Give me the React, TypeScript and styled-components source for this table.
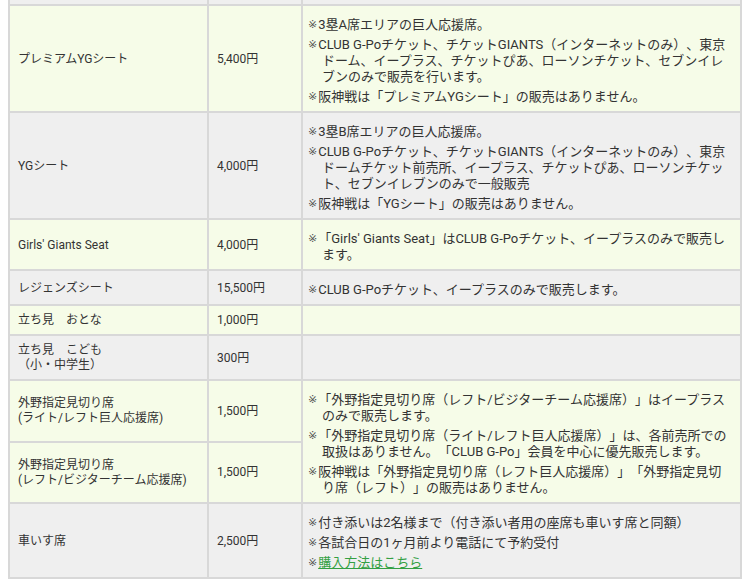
import styled, { createGlobalStyle } from "styled-components";

const GlobalStyle = createGlobalStyle`
    body {
        margin: 0;
        background: #ffffff;
        font-family: Roboto, "Noto Sans CJK JP", sans-serif;
        color: #333333;
    }
`
const Wrapper = styled.div`
    padding: 0 5px 0 8px;
`
const Table = styled.table`
    width: 732px;
    border-collapse: collapse;
    table-layout: fixed;
    font-size: 12px;
    text-spacing-trim: space-all;
`
const Col = styled.col<{ $w: number }>`
    width: ${(p) => p.$w}px;
`
const Row = styled.tr<{ $tone: "green" | "gray" }>`
    background: ${(p) => (p.$tone === "green" ? "#f6fce8" : "#efefef")};
`
const Cell = styled.td`
    border: 2px solid #d8d8d8;
    vertical-align: middle;
    line-height: 15px;
    padding: 7px 8px 6px;
`
const NoteCell = styled(Cell)`
    padding: 7px 8px 6px 5px;
    font-size: 13px;
    line-height: 16px;
`
const Spacer = styled.td`
    height: 4px;
    padding: 0;
    border: 2px solid #d8d8d8;
    border-top: none;
`
const Note = styled.p`
    margin: 4px 0 0;
    padding-left: 14px;
    text-indent: -14px;
`
const Mark = styled.span`
    font-size: 11px;
    font-family: "DejaVu Sans", sans-serif;
    vertical-align: top;
    line-height: 16px;
    margin-right: 1px;
    color: #555555;
`
const Link = styled.a`
    color: #33a043;
    text-decoration: underline;
`

interface Seat {
    name: React.ReactNode;
    price: string;
    notes?: React.ReactNode[];
    noteSpan?: number;
    skipNotes?: boolean;
}

const seats: Seat[] = [
    {
        name: "プレミアムYGシート",
        price: "5,400円",
        notes: [
            "3塁A席エリアの巨人応援席。",
            "CLUB G-Poチケット、チケットGIANTS（インターネットのみ）、東京ドーム、イープラス、チケットぴあ、ローソンチケット、セブンイレブンのみで販売を行います。",
            "阪神戦は「プレミアムYGシート」の販売はありません。",
        ],
    },
    {
        name: "YGシート",
        price: "4,000円",
        notes: [
            "3塁B席エリアの巨人応援席。",
            "CLUB G-Poチケット、チケットGIANTS（インターネットのみ）、東京ドームチケット前売所、イープラス、チケットぴあ、ローソンチケット、セブンイレブンのみで一般販売",
            "阪神戦は「YGシート」の販売はありません。",
        ],
    },
    {
        name: "Girls' Giants Seat",
        price: "4,000円",
        notes: ["「Girls' Giants Seat」はCLUB G-Poチケット、イープラスのみで販売します。"],
    },
    {
        name: "レジェンズシート",
        price: "15,500円",
        notes: ["CLUB G-Poチケット、イープラスのみで販売します。"],
    },
    { name: "立ち見　おとな", price: "1,000円", notes: [] },
    {
        name: (
            <>
                立ち見　こども
                <br />
                （小・中学生）
            </>
        ),
        price: "300円",
        notes: [],
    },
    {
        name: (
            <>
                外野指定見切り席
                <br />
                (ライト/レフト巨人応援席)
            </>
        ),
        price: "1,500円",
        noteSpan: 2,
        notes: [
            "「外野指定見切り席（レフト/ビジターチーム応援席）」はイープラスのみで販売します。",
            "「外野指定見切り席（ライト/レフト巨人応援席）」は、各前売所での取扱はありません。「CLUB G-Po」会員を中心に優先販売します。",
            "阪神戦は「外野指定見切り席（レフト巨人応援席）」「外野指定見切り席（レフト）」の販売はありません。",
        ],
    },
    {
        name: (
            <>
                外野指定見切り席
                <br />
                (レフト/ビジターチーム応援席)
            </>
        ),
        price: "1,500円",
        skipNotes: true,
    },
    {
        name: "車いす席",
        price: "2,500円",
        notes: [
            "付き添いは2名様まで（付き添い者用の座席も車いす席と同額）",
            "各試合日の1ヶ月前より電話にて予約受付",
            <Link href="#">購入方法はこちら</Link>,
        ],
    },
];

const tones: ("green" | "gray")[] = ["green", "gray", "green", "gray", "green", "gray", "green", "green", "gray"];

function App() {
    return (
        <>
            <GlobalStyle />
            <Wrapper>
                <Table>
                    <colgroup>
                        <Col $w={199} />
                        <Col $w={94} />
                        <Col $w={439} />
                    </colgroup>
                    <tbody>
                        <Row $tone="gray">
                            <Spacer />
                            <Spacer />
                            <Spacer />
                        </Row>
                        {seats.map((seat, i) => (
                            <Row key={i} $tone={tones[i]}>
                                <Cell>{seat.name}</Cell>
                                <Cell>{seat.price}</Cell>
                                {!seat.skipNotes && (
                                    <NoteCell rowSpan={seat.noteSpan}>
                                        {seat.notes?.map((n, j) => (
                                            <Note key={j}>
                                                <Mark>※</Mark>
                                                {n}
                                            </Note>
                                        ))}
                                    </NoteCell>
                                )}
                            </Row>
                        ))}
                    </tbody>
                </Table>
            </Wrapper>
        </>
    );
}

export default App;
